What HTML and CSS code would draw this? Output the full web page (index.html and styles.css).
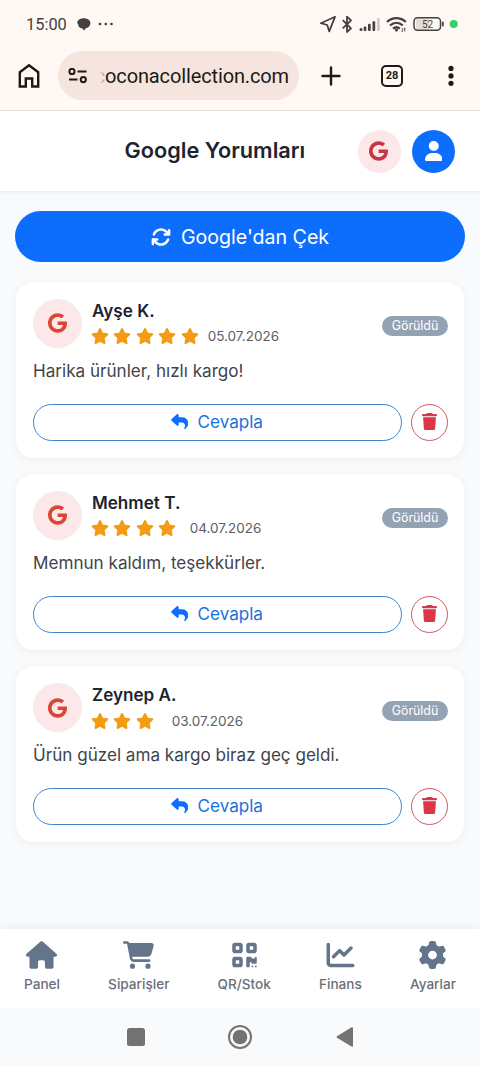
FILE: index.html
```html
<!DOCTYPE html>
<html lang="tr">
<head>
<meta charset="utf-8">
<title>Google Yorumları</title>
<link rel="stylesheet" href="styles.css">
</head>
<body>
<svg class="defs" aria-hidden="true">
  <symbol id="google" viewBox="0 0 488 512"><path d="M488 261.8C488 403.3 391.1 504 248 504 110.8 504 0 393.2 0 256S110.8 8 248 8c66.8 0 123 24.5 166.3 64.9l-67.5 64.9C258.5 52.6 94.3 116.6 94.3 256c0 86.5 69.1 156.6 153.7 156.6 98.2 0 135-70.4 140.8-106.9H248v-85.3h236.1c2.3 12.7 3.9 24.9 3.9 41.4z"/></symbol>
  <symbol id="star" viewBox="0 0 576 512"><path d="M316.9 18C311.6 7 300.4 0 288.1 0s-23.4 7-28.8 18L195 150.3 51.4 171.5c-12 1.8-22 10.2-25.7 21.7s-.7 24.2 7.9 32.7L137.8 329 113.2 474.7c-2 12 3 24.2 12.9 31.3s23 8 33.8 2.3l128.3-68.5 128.3 68.5c10.8 5.7 23.9 4.9 33.8-2.3s14.9-19.3 12.9-31.3L438.5 329 542.7 225.9c8.6-8.5 11.7-21.2 7.9-32.7s-13.7-19.9-25.7-21.7L381.2 150.3 316.9 18z"/></symbol>
  <symbol id="reply" viewBox="0 0 512 512"><path d="M205 34.8c11.5 5.1 19 16.6 19 29.2v64H336c97.2 0 176 78.8 176 176c0 113.3-81.5 163.9-100.2 174.1c-2.5 1.4-5.3 1.9-8.1 1.9c-10.9 0-19.7-8.9-19.7-19.7c0-7.5 4.3-14.4 9.8-19.5c9.4-8.8 22.2-26.4 22.2-56.7c0-53-43-96-96-96H224v64c0 12.6-7.4 24.1-19 29.2s-25 3-34.4-5.4l-160-144C3.9 225.7 0 217.1 0 208s3.9-17.7 10.6-23.8l160-144c9.4-8.5 22.9-10.6 34.4-5.4z"/></symbol>
  <symbol id="trash" viewBox="0 0 448 512"><path d="M135.2 17.7C140.6 6.8 151.7 0 163.8 0H284.2c12.1 0 23.2 6.8 28.6 17.7L320 32h96c17.7 0 32 14.3 32 32s-14.3 32-32 32H32C14.3 96 0 81.7 0 64S14.3 32 32 32h96l7.2-14.3zM32 128H416L394.8 467c-1.6 25.3-22.6 45-47.9 45H101.1c-25.3 0-46.3-19.7-47.9-45L32 128z"/></symbol>
</svg>

<div class="statusbar">
  <span class="clock">15:00</span>
  <svg class="chat" viewBox="0 0 14 13"><path d="M6.4.2C10.3.2 13.4 2 13.4 5.2c0 2.5-2 4.700-4.400 4.900L7.200 12.600 5.400 10.600C2.300 9.900 1 8 1.300 6.400 0 5.200 0 4 .6 3.200 1.500 1.200 3.700.2 6.400.2z"/></svg>
  <svg class="dots" viewBox="0 0 16 4"><circle cx="2" cy="2" r="1.3"/><circle cx="7.800" cy="2" r="1.300"/><circle cx="13.500" cy="2" r="1.300"/></svg>
  <span class="grow"></span>
  <svg class="status-icons" viewBox="0 0 138 20">
    <path class="line" d="M-.2 9.200 14 2.800 8.200 17.300 6.200 11z"/>
    <path class="line" d="M21.700 6.200 30 14.300 26 18V2.600L30 6.300 21.700 14.300"/>
    <g><circle cx="40" cy="15.600" r="1.500"/><rect x="42.700" y="12.500" width="2.700" height="4.500" rx="1"/><rect x="47" y="9.800" width="2.700" height="7.200" rx="1"/><rect x="51.500" y="7.200" width="2.700" height="9.800" rx="1"/><rect class="faint" x="56" y="4" width="2.700" height="13" rx="1"/></g>
    <path class="wifi" d="M66 8C71.500 2.900 79.500 2.900 84.800 8M69 11.500C73 8 78 8 81.800 11.500M72 14.600C74.300 12.800 76.700 12.800 78.800 14.600"/>
    <circle cx="75.400" cy="16" r="1.600"/><path d="M80 16.500l1.300 1.600 1.300-1.600M82.500 15.200l1.200-1.600 1.300 1.600M80.900 14h.8v3h-.8zM83.400 14.500h.8v3h-.8z"/>
    <rect class="battery-fill" x="95" y="4.500" width="13" height="11" rx="2"/>
    <rect class="battery" x="93" y="3.700" width="26.500" height="12.500" rx="3.500"/>
    <path d="M121 7.800h1.700v4.400H121z"/>
    <text x="106.500" y="13.500" text-anchor="middle">52</text>
    <circle class="live" cx="132.700" cy="10" r="4"/>
  </svg>
</div>

<div class="toolbar">
  <svg class="home" viewBox="0 0 24 26"><path d="M2.800 9.200 12 2.200 21.200 9.200V23.500H15.200V15.500H8.800V23.500H2.800z"/></svg>
  <div class="omnibox">
    <svg class="tune" viewBox="0 0 20 16"><circle cx="4" cy="3.400" r="2.600"/><path d="M9.500 3.400h9M1 11.600h8.500"/><circle cx="15.300" cy="11.600" r="2.600"/></svg>
    <span class="url"><i>c</i>oconacollection.com</span>
  </div>
  <svg class="plus" viewBox="0 0 20 20"><path d="M1.500 10h17M10 1.500v17"/></svg>
  <span class="tabs">28</span>
  <svg class="more" viewBox="0 0 6 22"><circle cx="3" cy="3.400" r="2.600"/><circle cx="3" cy="10.900" r="2.600"/><circle cx="3" cy="18.300" r="2.600"/></svg>
</div>

<header class="header">
  <h1>Google Yorumları</h1>
  <span class="round source"><svg><use href="#google"/></svg></span>
  <span class="round user"><svg viewBox="0 0 448 512"><path d="M224 256A128 128 0 1 0 224 0a128 128 0 1 0 0 256zm-45.700 48C79.800 304 0 383.800 0 482.300C0 498.700 13.300 512 29.700 512H418.300c16.400 0 29.700-13.300 29.700-29.700C448 383.800 368.200 304 269.700 304H178.300z"/></svg></span>
</header>

<main class="main">
  <button class="fetch"><svg viewBox="0 0 512 512"><path d="M105.100 202.600c7.700-21.800 20.200-42.300 37.800-59.800c62.500-62.500 163.800-62.500 226.300 0L386.300 160H352c-17.700 0-32 14.300-32 32s14.300 32 32 32H463.900c17.700 0 32-14.300 32-32V80c0-17.700-14.300-32-32-32s-32 14.300-32 32v35.200L414.400 97.600c-87.500-87.500-229.300-87.500-316.800 0C73.200 122 55.600 150.700 44.800 181.400c-5.900 16.700 2.900 34.900 19.500 40.800s34.900-2.900 40.800-19.500zM39 289.300c-5 1.500-9.800 4.200-13.700 8.200c-4 4-6.700 8.800-8.100 14c-.3 1.200-.6 2.500-.8 3.800c-.3 1.700-.4 3.400-.4 5.100V432c0 17.700 14.300 32 32 32s32-14.300 32-32V396.900l17.600 17.500c87.500 87.400 229.300 87.400 316.700 0c24.400-24.400 42.100-53.100 52.900-83.700c5.900-16.700-2.900-34.900-19.500-40.800s-34.900 2.900-40.800 19.500c-7.700 21.800-20.200 42.300-37.800 59.800c-62.500 62.500-163.800 62.500-226.300 0l-.1-.1L125.600 352H160c17.700 0 32-14.300 32-32s-14.300-32-32-32H48.400c-1.600 0-3.200 .1-4.800 .3s-3.100 .5-4.600 1z"/></svg><span>Google'dan Çek</span></button>

  <article class="card">
    <div class="top">
      <span class="avatar"><svg><use href="#google"/></svg></span>
      <div class="who"><h2>Ayşe K.</h2>
        <div class="rating"><svg><use href="#star"/></svg><svg><use href="#star"/></svg><svg><use href="#star"/></svg><svg><use href="#star"/></svg><svg><use href="#star"/></svg><time>05.07.2026</time></div></div>
      <span class="badge">Görüldü</span>
    </div>
    <p>Harika ürünler, hızlı kargo!</p>
    <div class="actions"><button class="reply"><svg><use href="#reply"/></svg><span>Cevapla</span></button><button class="delete" aria-label="Sil"><svg><use href="#trash"/></svg></button></div>
  </article>

  <article class="card">
    <div class="top">
      <span class="avatar"><svg><use href="#google"/></svg></span>
      <div class="who"><h2>Mehmet T.</h2>
        <div class="rating"><svg><use href="#star"/></svg><svg><use href="#star"/></svg><svg><use href="#star"/></svg><svg><use href="#star"/></svg><i></i><time>04.07.2026</time></div></div>
      <span class="badge">Görüldü</span>
    </div>
    <p>Memnun kaldım, teşekkürler.</p>
    <div class="actions"><button class="reply"><svg><use href="#reply"/></svg><span>Cevapla</span></button><button class="delete" aria-label="Sil"><svg><use href="#trash"/></svg></button></div>
  </article>

  <article class="card">
    <div class="top">
      <span class="avatar"><svg><use href="#google"/></svg></span>
      <div class="who"><h2>Zeynep A.</h2>
        <div class="rating"><svg><use href="#star"/></svg><svg><use href="#star"/></svg><svg><use href="#star"/></svg><i></i><i></i><time>03.07.2026</time></div></div>
      <span class="badge">Görüldü</span>
    </div>
    <p>Ürün güzel ama kargo biraz geç geldi.</p>
    <div class="actions"><button class="reply"><svg><use href="#reply"/></svg><span>Cevapla</span></button><button class="delete" aria-label="Sil"><svg><use href="#trash"/></svg></button></div>
  </article>
</main>

<nav class="nav">
  <a><svg viewBox="0 0 576 512"><path d="M575.800 255.500c0 18-15 32.100-32 32.100h-32l.7 160.200c0 2.700-.2 5.400-.5 8.100V472c0 22.100-17.900 40-40 40H392c-22.100 0-40-17.900-40-40V384c0-17.700-14.300-32-32-32H256c-17.700 0-32 14.300-32 32v88c0 22.100-17.900 40-40 40H104c-22.100 0-40-17.900-40-40V287.600H32c-18 0-32-14-32-32.100c0-9 3-17 10-24L266.400 8c7-7 15-8 22-8s15 2 21 7L564.800 231.500c8 7 12 15 11 24z"/></svg><span>Panel</span></a>
  <a><svg viewBox="0 0 576 512"><path d="M0 24C0 10.700 10.700 0 24 0H69.500c22 0 41.500 12.800 50.600 32h411c26.300 0 45.500 25 38.600 50.400l-41 152.300c-8.500 31.400-37 53.300-69.500 53.300H170.700l5.400 28.500c2.200 11.300 12.100 19.500 23.600 19.500H488c13.300 0 24 10.700 24 24s-10.700 24-24 24H199.700c-34.600 0-64.300-24.600-70.700-58.500L77.400 54.500c-.7-3.800-4-6.500-7.900-6.500H24C10.700 48 0 37.300 0 24zM128 464a48 48 0 1 1 96 0 48 48 0 1 1 -96 0zm336-48a48 48 0 1 1 0 96 48 48 0 1 1 0-96z"/></svg><span>Siparişler</span></a>
  <a><svg viewBox="0 0 448 512"><path d="M0 80C0 53.500 21.500 32 48 32h96c26.500 0 48 21.500 48 48v96c0 26.500-21.500 48-48 48H48c-26.500 0-48-21.500-48-48V80zM64 96v64h64V96H64zM0 336c0-26.500 21.500-48 48-48h96c26.500 0 48 21.500 48 48v96c0 26.500-21.500 48-48 48H48c-26.500 0-48-21.500-48-48V336zm64 16v64h64V352H64zM304 32h96c26.500 0 48 21.500 48 48v96c0 26.500-21.500 48-48 48H304c-26.500 0-48-21.500-48-48V80c0-26.500 21.500-48 48-48zm80 64H320v64h64V96zM256 304c0-8.800 7.200-16 16-16h64c8.800 0 16 7.200 16 16s7.200 16 16 16h32c8.800 0 16-7.200 16-16s7.200-16 16-16s16 7.200 16 16v96c0 8.800-7.200 16-16 16H368c-8.800 0-16-7.200-16-16s-7.200-16-16-16s-16 7.200-16 16v64c0 8.800-7.200 16-16 16H272c-8.800 0-16-7.200-16-16V304zM368 480a16 16 0 1 1 0-32 16 16 0 1 1 0 32zm64 0a16 16 0 1 1 0-32 16 16 0 1 1 0 32z"/></svg><span>QR/Stok</span></a>
  <a><svg viewBox="0 0 512 512"><path d="M64 64c0-17.700-14.300-32-32-32S0 46.300 0 64V400c0 44.200 35.800 80 80 80H480c17.700 0 32-14.300 32-32s-14.300-32-32-32H80c-8.800 0-16-7.200-16-16V64zm406.600 86.600c12.500-12.500 12.500-32.800 0-45.300s-32.800-12.500-45.300 0L320 210.700l-57.400-57.400c-12.500-12.500-32.800-12.500-45.300 0l-112 112c-12.500 12.500-12.500 32.800 0 45.300s32.800 12.500 45.300 0L240 221.300l57.400 57.400c12.500 12.500 32.800 12.500 45.300 0l128-128z"/></svg><span>Finans</span></a>
  <a><svg viewBox="0 0 512 512"><path d="M495.900 166.600c3.200 8.700 .5 18.400-6.400 24.600l-43.300 39.400c1.100 8.300 1.700 16.800 1.700 25.400s-.6 17.100-1.700 25.400l43.300 39.400c6.900 6.200 9.600 15.900 6.400 24.600c-4.400 11.900-9.700 23.300-15.800 34.300l-4.700 8.100c-6.600 11-14 21.400-22.100 31.200c-5.900 7.200-15.700 9.600-24.500 6.800l-55.700-17.700c-13.400 10.300-28.200 18.900-44 25.400l-12.500 57.100c-2 9.100-9 16.300-18.200 17.800c-13.800 2.300-28 3.500-42.500 3.500s-28.700-1.200-42.500-3.500c-9.200-1.500-16.200-8.700-18.200-17.800l-12.500-57.100c-15.800-6.500-30.600-15.100-44-25.400L83.100 425.900c-8.800 2.800-18.600 .3-24.500-6.800c-8.100-9.800-15.500-20.200-22.100-31.200l-4.700-8.100c-6.100-11-11.400-22.400-15.800-34.300c-3.200-8.700-.5-18.400 6.400-24.600l43.300-39.400C64.600 273.100 64 264.600 64 256s.6-17.100 1.700-25.400L22.400 191.200c-6.900-6.200-9.600-15.900-6.400-24.600c4.400-11.900 9.700-23.300 15.800-34.300l4.700-8.100c6.600-11 14-21.400 22.100-31.200c5.900-7.200 15.700-9.600 24.500-6.800l55.700 17.700c13.400-10.300 28.200-18.900 44-25.400l12.500-57.100c2-9.100 9-16.300 18.200-17.800C227.300 1.200 241.500 0 256 0s28.700 1.200 42.500 3.500c9.200 1.500 16.200 8.700 18.200 17.800l12.500 57.100c15.800 6.500 30.600 15.100 44 25.400l55.700-17.700c8.800-2.800 18.600-.3 24.500 6.800c8.100 9.800 15.500 20.200 22.100 31.200l4.700 8.100c6.100 11 11.400 22.400 15.800 34.300zM256 336a80 80 0 1 0 0-160 80 80 0 1 0 0 160z"/></svg><span>Ayarlar</span></a>
</nav>

<footer class="system">
  <svg viewBox="0 0 26 26"><rect x="4" y="4" width="18" height="18" rx="2.500"/></svg>
  <svg viewBox="0 0 26 26"><circle class="ring" cx="13" cy="13" r="11"/><circle cx="13" cy="13" r="7.300"/></svg>
  <svg viewBox="0 0 26 26"><path d="M5 12.200 19.500 3.300Q21 2.700 21 4.200V21.800Q21 23.200 19.500 22.600L5 13.800Q4 13 5 12.200z"/></svg>
</footer>
</body>
</html>
```

FILE: styles.css
```css
* { box-sizing: border-box; }
body {
  margin: 0;
  width: 480px;
  height: 1066px;
  overflow: hidden;
  display: flex;
  flex-direction: column;
  background: #f8fafc;
  color: #1c2430;
  font-family: Inter, "Noto Sans", sans-serif;
}
svg { display: block; fill: currentColor; flex: none; }
button { font: inherit; padding: 0; margin: 0; }
h1, h2, p { margin: 0; }
.defs { position: absolute; width: 0; height: 0; }

/* Android status bar */
.statusbar {
  height: 48px;
  flex: none;
  display: flex;
  align-items: center;
  padding: 0 21px 0 26px;
  background: #fff8f4;
  color: #45403d;
}
.clock { width: 51px; padding-top: 1px; font: 400 16.4px/20px Roboto, sans-serif; }
.chat { width: 14px; height: 13px; }
.dots { width: 16px; height: 4px; margin-left: 7px; }
.grow { flex: 1; }
.status-icons { width: 138px; height: 20px; overflow: visible; }
.status-icons .line { fill: none; stroke: currentColor; stroke-width: 1.8; stroke-linejoin: round; }
.status-icons .wifi { fill: none; stroke: currentColor; stroke-width: 2.3; }
.status-icons .faint { fill: #cdc7c4; }
.status-icons .battery { fill: none; stroke: currentColor; stroke-width: 1.5; }
.status-icons .battery-fill { fill: #e2dddb; }
.status-icons .live { fill: #35cf68; }
.status-icons text { font: 400 10px Roboto, sans-serif; }

/* Browser toolbar */
.toolbar {
  height: 63px;
  flex: none;
  display: flex;
  align-items: center;
  padding: 0 26px 7px 17px;
  background: #fff8f4;
  border-bottom: 1px solid #ece3e0;
  color: #201a17;
}
.home { width: 24px; height: 26px; }
.home path { fill: none; stroke: currentColor; stroke-width: 2.4; }
.omnibox {
  width: 241px;
  height: 49px;
  margin-left: 17px;
  padding: 0 10px;
  border-radius: 25px;
  background: #f5e5de;
  display: flex;
  align-items: center;
  justify-content: space-between;
}
.tune { width: 20px; height: 16px; }
.tune * { fill: none; stroke: currentColor; stroke-width: 2; }
.url {
  display: flex;
  font: 400 20px/28px Roboto, sans-serif;
  letter-spacing: -.13px;
}
.url i {
  font-style: normal;
  color: transparent;
  background: linear-gradient(90deg, #f5e5de 45%, #a2948d);
  background-clip: text;
}
.plus { width: 20px; height: 20px; margin-left: 22px; }
.plus path { stroke: currentColor; stroke-width: 2.4; stroke-linecap: round; }
.tabs {
  width: 22px;
  height: 22px;
  margin-left: 40px;
  border: 2px solid;
  border-radius: 5px;
  font: 700 11px/18px Roboto, sans-serif;
  text-align: center;
}
.more { width: 6px; height: 22px; margin-left: auto; }

/* Page header */
.header {
  height: 80px;
  flex: none;
  display: flex;
  align-items: center;
  padding: 0 25px 0 124.5px;
  background: #fff;
  box-shadow: 0 1px 4px rgba(15, 23, 42, .08);
}
.header h1 { padding-bottom: 2px; font-size: 21.7px; line-height: 28px; font-weight: 600; white-space: nowrap; }
.round { width: 43px; height: 43px; border-radius: 50%; display: flex; align-items: center; justify-content: center; }
.source { margin-left: auto; background: #fce8e8; color: #ca3545; }
.source svg { width: 19px; height: 20px; margin: 0 2px 1px 0; }
.user { margin-left: 11px; background: #0d6efd; color: #fff; }
.user svg { width: 17.5px; height: 20px; margin-bottom: 1px; }

.main { flex: 1; padding: 20px 15px 0; }
.fetch {
  width: 450px;
  height: 51px;
  margin-bottom: 19.7px;
  border: 0;
  border-radius: 26px;
  background: #0d6efd;
  color: #fff;
  display: flex;
  align-items: center;
  justify-content: center;
  gap: 10px;
  font-size: 19.6px;
}
.fetch svg { width: 20px; height: 20px; }

/* Review cards */
.card {
  height: 176px;
  margin: 0 1px 16.2px;
  padding: 17px 16px 0 17px;
  background: #fff;
  border-radius: 18px;
  box-shadow: 0 2px 10px rgba(15, 23, 42, .05);
}
.top { display: flex; height: 49px; }
.avatar {
  width: 49px;
  height: 49px;
  border-radius: 50%;
  background: #fce8e8;
  color: #db4437;
  display: flex;
  align-items: center;
  justify-content: center;
}
.avatar svg { width: 19px; height: 20px; margin-right: 1px; }
.who { flex: 1; margin-left: 10px; }
.who h2 { font-size: 17.1px; line-height: 24px; font-weight: 600; }
.rating { display: flex; align-items: center; gap: 4.4px; height: 27px; }
.rating svg { width: 18px; height: 16px; color: #f39c12; }
.rating svg:first-child { margin-left: -1px; }
.rating time { margin-left: 4.7px; font-size: 13.5px; color: #5c6066; }
.badge {
  width: 66px;
  height: 20px;
  margin-top: 17.5px;
  border-radius: 10px;
  background: #94a3b4;
  color: #fff;
  font-size: 12.4px;
  line-height: 20px;
  text-align: center;
}
.card p { margin-top: 10px; font-size: 17.1px; line-height: 25px; color: #3f444a; white-space: nowrap; }
.actions { display: flex; justify-content: space-between; margin-top: 21px; }
.reply {
  width: 368.5px;
  height: 37px;
  padding: 0 1px 2px 0;
  border: 1px solid #4285c5;
  border-radius: 19px;
  background: none;
  color: #196fdc;
  display: flex;
  align-items: center;
  justify-content: center;
  gap: 9.5px;
  font-size: 17.1px;
}
.reply svg { width: 17.5px; height: 17px; color: #0d6efd; }
.delete {
  width: 37px;
  height: 37px;
  padding: 0 1px 2px 0;
  border: 1px solid #cd5968;
  border-radius: 50%;
  background: none;
  color: #dc3545;
  display: flex;
  align-items: center;
  justify-content: center;
}
.delete svg { width: 15px; height: 17px; }

/* Bottom navigation */
.nav {
  height: 79px;
  flex: none;
  display: flex;
  justify-content: space-between;
  padding: 12px 24px 0;
  background: #fff;
  box-shadow: 0 -2px 8px rgba(15, 23, 42, .06);
  color: #64748b;
}
.nav a { display: flex; flex-direction: column; align-items: center; gap: 6px; }
.nav svg { width: 31px; height: 28px; }
.nav span { font-size: 13.6px; line-height: 18px; font-weight: 500; color: #686f79; }

/* Android navigation keys */
.system {
  height: 58px;
  flex: none;
  display: flex;
  justify-content: center;
  align-items: center;
  gap: 78.5px;
  background: #f9fafc;
  color: #737373;
}
.system svg { width: 26px; height: 26px; }
.ring { fill: none; stroke: currentColor; stroke-width: 2; }
```
